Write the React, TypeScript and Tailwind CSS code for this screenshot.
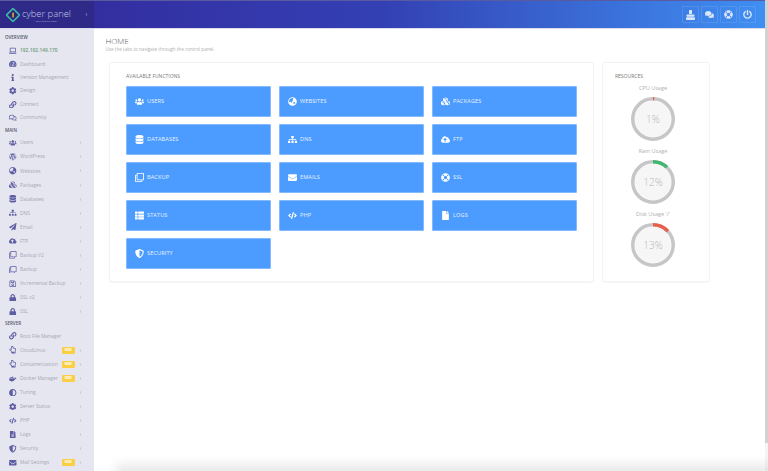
import React from "react";
import {
  FaLaptop, FaTachometerAlt, FaInfo, FaCog, FaLink, FaRegComments, FaComments, FaUsers, FaWordpress, FaGlobeAsia, FaCubes,
  FaDatabase, FaSitemap, FaPaperPlane, FaCloudUploadAlt, FaRegClone, FaRegSave, FaLock, FaRegHandPointUp,
  FaAdjust, FaCode, FaFileAlt, FaShieldAlt, FaEnvelope, FaLifeRing, FaThList, FaFile,
  FaPowerOff, FaDocker, FaChevronRight, FaChevronLeft,
} from "react-icons/fa";

type Row = { label: string; icon: React.ElementType; arrow?: boolean; badge?: string; green?: boolean };

const overview: Row[] = [
  { label: "192.192.149.170", icon: FaLaptop, green: true },
  { label: "Dashboard", icon: FaTachometerAlt },
  { label: "Version Management", icon: FaInfo },
  { label: "Design", icon: FaCog },
  { label: "Connect", icon: FaLink },
  { label: "Community", icon: FaRegComments },
];
const main: Row[] = [
  { label: "Users", icon: FaUsers, arrow: true },
  { label: "WordPress", icon: FaWordpress, arrow: true },
  { label: "Websites", icon: FaGlobeAsia, arrow: true },
  { label: "Packages", icon: FaCubes, arrow: true },
  { label: "Databases", icon: FaDatabase, arrow: true },
  { label: "DNS", icon: FaSitemap, arrow: true },
  { label: "Email", icon: FaPaperPlane, arrow: true },
  { label: "FTP", icon: FaCloudUploadAlt, arrow: true },
  { label: "Backup V2", icon: FaRegClone, arrow: true },
  { label: "Backup", icon: FaRegClone, arrow: true },
  { label: "Incremental Backup", icon: FaRegSave, arrow: true },
  { label: "SSL v2", icon: FaLock, arrow: true },
  { label: "SSL", icon: FaLock, arrow: true },
];
const server: Row[] = [
  { label: "Root File Manager", icon: FaLink },
  { label: "CloudLinux", icon: FaRegHandPointUp, arrow: true, badge: "NEW" },
  { label: "Containerization", icon: FaRegHandPointUp, arrow: true, badge: "NEW" },
  { label: "Docker Manager", icon: FaDocker, arrow: true, badge: "NEW" },
  { label: "Tuning", icon: FaAdjust, arrow: true },
  { label: "Server Status", icon: FaCog, arrow: true },
  { label: "PHP", icon: FaCode, arrow: true },
  { label: "Logs", icon: FaFileAlt, arrow: true },
  { label: "Security", icon: FaShieldAlt, arrow: true },
  { label: "Mail Settings", icon: FaEnvelope, arrow: true, badge: "NEW" },
];

const functions: { label: string; icon: React.ElementType }[] = [
  { label: "USERS", icon: FaUsers },
  { label: "WEBSITES", icon: FaGlobeAsia },
  { label: "PACKAGES", icon: FaCubes },
  { label: "DATABASES", icon: FaDatabase },
  { label: "DNS", icon: FaSitemap },
  { label: "FTP", icon: FaCloudUploadAlt },
  { label: "BACKUP", icon: FaRegClone },
  { label: "EMAILS", icon: FaEnvelope },
  { label: "SSL", icon: FaLifeRing },
  { label: "STATUS", icon: FaThList },
  { label: "PHP", icon: FaCode },
  { label: "LOGS", icon: FaFile },
  { label: "SECURITY", icon: FaShieldAlt },
];

function TubeIcon() {
  return (
    <svg width="9" height="10" viewBox="0 0 9 10" fill="currentColor">
      <rect x="3" y="0" width="3" height="4" rx="0.6" />
      <rect x="0.5" y="4.6" width="8" height="2.2" rx="0.8" />
      <rect x="0" y="7.2" width="9" height="2.8" rx="0.8" />
    </svg>
  );
}

function SideRow({ row, h }: { row: Row; h: string }) {
  const Icon = row.icon;
  return (
    <div className={`flex items-center pl-[9px] pr-[12px] ${h}`}>
      <span className="mr-[3px] flex w-[8px] justify-center text-[#5f5ea3]">
        <Icon className="h-[7.5px] w-[7.5px]" />
      </span>
      <span className={`text-[4.9px] leading-none whitespace-nowrap ${row.green ? "text-[#6f9a78] font-semibold" : "text-[#a6a6b6]"}`}>
        {row.label}
      </span>
      <span className="flex-1" />
      {row.badge && (
        <span className="mr-[4px] flex h-[7px] w-[13.5px] items-center justify-center rounded-[1px] bg-[#fbcf45] text-[3px] font-bold leading-none text-white">
          {row.badge}
        </span>
      )}
      {row.arrow && <FaChevronRight className="h-[3px] w-[3px] text-[#b0b0c0]" />}
    </div>
  );
}

function SideHead({ children, className }: { children: string; className: string }) {
  return <div className={`pl-[5px] text-[4.5px] font-semibold leading-none text-[#55556a] ${className}`}>{children}</div>;
}

function Gauge({ label, pct, color, className }: { label: string; pct: number; color: string; className: string }) {
  const r = 20.25;
  const c = 2 * Math.PI * r;
  return (
    <div className={`flex flex-col items-center ${className}`}>
      <div className="text-[5.5px] leading-[7px] text-[#b0b0b0]">{label}</div>
      <svg width="44" height="44" viewBox="0 0 44 44" className="mt-[5px]">
        <circle cx="22" cy="22" r="18" fill="#f6f6f6" />
        <circle cx="22" cy="22" r={r} fill="none" stroke="#c6c6c6" strokeWidth="3.5" />
        <circle
          cx="22"
          cy="22"
          r={r}
          fill="none"
          stroke={color}
          strokeWidth="3.5"
          strokeDasharray={`${(c * pct) / 100} ${c}`}
          transform="rotate(-90 22 22)"
        />
        <text x="22" y="25.5" textAnchor="middle" fontSize="10" fontWeight="300" fill="#b8b8b8" fontFamily="Open Sans, sans-serif">
          {pct}%
        </text>
      </svg>
    </div>
  );
}

export default function App() {
  return (
    <div className="relative flex h-[471px] w-[768px] overflow-hidden bg-white font-['Open_Sans',sans-serif]">
      <div className="flex w-[765px] shrink-0 flex-col">
        <header className="flex h-[29px] shrink-0 border-t border-b border-t-[#5a5aa0] border-b-[#dcdcee] bg-gradient-to-r from-[#33289a] via-[#3340b4] to-[#3f8ff2]">
          <div className="flex w-[94px] shrink-0 items-center bg-[#2f2a87] pl-[6px]">
            <svg width="14" height="14" viewBox="0 0 14 14">
              <path d="M7 0.5 13.5 7 7 13.5 0.5 7Z" fill="none" stroke="#3bb8a6" strokeWidth="1.6" />
              <path d="M7 3 11 7 7 11 3 7Z" fill="#27256f" />
              <rect x="6.3" y="4.6" width="1.5" height="4.8" fill="#f2b632" />
            </svg>
            <div className="ml-[2px] flex w-[49px] flex-col items-center pt-[3px]">
              <span className="text-[9.4px] font-light leading-[8px] whitespace-nowrap text-[#c3c7e8]">cyber panel</span>
              <span className="mt-[2px] text-[2.5px] leading-[3px] whitespace-nowrap text-[#a9addb]">web hosting panel</span>
            </div>
            <FaChevronLeft className="ml-[14px] h-[3px] w-[3px] text-[#b5b7dd]" />
          </div>
          <div className="flex flex-1 items-center justify-end gap-[2px] pr-[9px]">
            {[TubeIcon, FaComments, FaLifeRing, FaPowerOff].map((I, i) => (
              <div key={i} className="flex h-[17px] w-[17px] items-center justify-center rounded-[1px] border border-[#ffffff1c] text-[#dbe6fb]">
                <I className="h-[9px] w-[9px]" />
              </div>
            ))}
          </div>
        </header>
        <div className="flex min-h-0 flex-1">
          <aside className="w-[94px] shrink-0 bg-[#e6e6f0] pt-[6px]">
            <SideHead className="mb-[4px] h-[5px]">OVERVIEW</SideHead>
            {overview.map((r) => <SideRow key={r.label} row={r} h="h-[13.4px]" />)}
            <SideHead className="mt-[3.5px] mb-[3px] h-[5px]">MAIN</SideHead>
            {main.map((r) => <SideRow key={r.label} row={r} h="h-[14.05px]" />)}
            <SideHead className="mt-[2.5px] mb-[3px] h-[5px]">SERVER</SideHead>
            {server.map((r) => <SideRow key={r.label} row={r} h="h-[14.1px]" />)}
          </aside>
          <main className="relative min-w-0 flex-1 pl-[11.5px] pt-[7px]">
            <h1 className="text-[8px] font-light leading-[10px] text-[#555]">HOME</h1>
            <p className="text-[4.6px] leading-[6px] text-[#b0b0b0]">Use the tabs to navigate through the control panel.</p>
            <div className="mt-[10px] flex gap-[8px] pl-[3.5px]">
              <section className="h-[220px] w-[485px] rounded-[2px] border border-[#f3f3f5] px-[16px] pt-[10px] shadow-[0_1px_1px_rgba(0,0,0,0.04)]">
                <div className="text-[5px] leading-[7px] text-[#777]">AVAILABLE FUNCTIONS</div>
                <div className="mt-[6px] grid grid-cols-3 gap-x-[8px] gap-y-[7px]">
                  {functions.map(({ label, icon: Icon }) => (
                    <div key={label} className="flex h-[31px] items-center rounded-[1px] border border-[#83b9ff] bg-[#4c9cff] pl-[7px] text-white">
                      <span className="flex w-[10px] justify-center">
                        <Icon className="h-[9px] w-[9px]" />
                      </span>
                      <span className="ml-[3px] text-[5.6px] leading-none tracking-[0.1px] text-[#e6f1ff]">{label}</span>
                    </div>
                  ))}
                </div>
              </section>
              <section className="h-[220px] w-[108px] rounded-[2px] border border-[#f3f3f5] pl-[12px] pt-[10px] shadow-[0_1px_1px_rgba(0,0,0,0.04)]">
                <div className="text-[5px] leading-[7px] text-[#777]">RESOURCES</div>
                <div className="w-[76px]">
                  <Gauge label="CPU Usage" pct={1} color="#e8604c" className="mt-[5px]" />
                  <Gauge label="Ram Usage" pct={12} color="#3fb86f" className="mt-[7px]" />
                  <Gauge label="Disk Usage '/'" pct={13} color="#e8604c" className="mt-[7px]" />
                </div>
              </section>
            </div>
            <div className="absolute right-0 bottom-[-2px] left-[28px] h-[2px] shadow-[0_0_12px_6px_rgba(0,0,0,0.1)]" />
          </main>
        </div>
      </div>
      <div className="flex w-[3px] shrink-0 flex-col bg-[#f4f4f4]">
        <div className="h-[443px] bg-[#d2d2d2]" />
      </div>
    </div>
  );
}
